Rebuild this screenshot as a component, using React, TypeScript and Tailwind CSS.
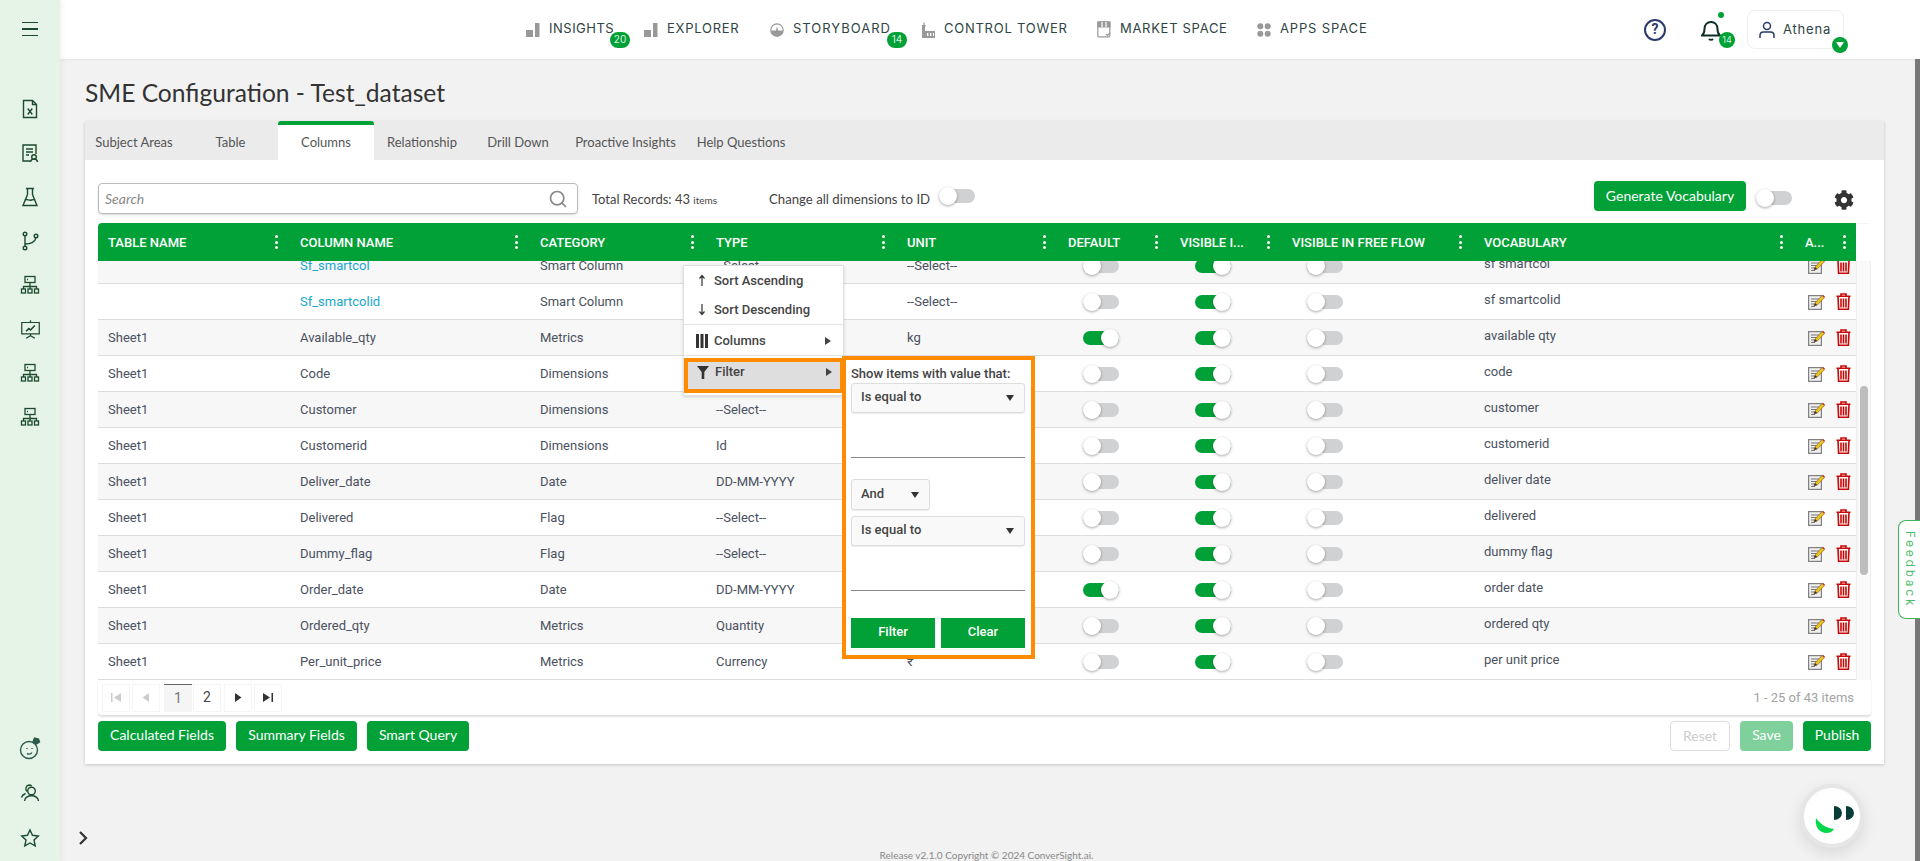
import { Search } from "lucide-react";
import { FaCog } from "react-icons/fa";

const green = "bg-[#02a137]";

const colWidths =
  "grid grid-cols-[192px_240px_176px_191px_161px_112px_112px_192px_321px_61px]";

const headers = [
  "Table Name",
  "Column Name",
  "Category",
  "Type",
  "Unit",
  "Default",
  "Visible I...",
  "Visible in Free Flow",
  "Vocabulary",
  "A...",
];

const rows = [
  { table: "", name: "Sf_smartcol", link: true, cat: "Smart Column", type: "--Select--", unit: "--Select--", def: false, vocab: "sf smartcol" },
  { table: "", name: "Sf_smartcolid", link: true, cat: "Smart Column", type: "--Select--", unit: "--Select--", def: false, vocab: "sf smartcolid" },
  { table: "Sheet1", name: "Available_qty", cat: "Metrics", type: "Quantity", unit: "kg", def: true, vocab: "available qty" },
  { table: "Sheet1", name: "Code", cat: "Dimensions", type: "--Select--", unit: "", def: false, vocab: "code" },
  { table: "Sheet1", name: "Customer", cat: "Dimensions", type: "--Select--", unit: "", def: false, vocab: "customer" },
  { table: "Sheet1", name: "Customerid", cat: "Dimensions", type: "Id", unit: "", def: false, vocab: "customerid" },
  { table: "Sheet1", name: "Deliver_date", cat: "Date", type: "DD-MM-YYYY", unit: "", def: false, vocab: "deliver date" },
  { table: "Sheet1", name: "Delivered", cat: "Flag", type: "--Select--", unit: "", def: false, vocab: "delivered" },
  { table: "Sheet1", name: "Dummy_flag", cat: "Flag", type: "--Select--", unit: "", def: false, vocab: "dummy flag" },
  { table: "Sheet1", name: "Order_date", cat: "Date", type: "DD-MM-YYYY", unit: "", def: true, vocab: "order date" },
  { table: "Sheet1", name: "Ordered_qty", cat: "Metrics", type: "Quantity", unit: "", def: false, vocab: "ordered qty" },
  { table: "Sheet1", name: "Per_unit_price", cat: "Metrics", type: "Currency", unit: "₹", def: false, vocab: "per unit price" },
];

const navItems = [
  { label: "INSIGHTS", width: "w-[118px]", icon: "bars", track: "tracking-[0.5px]", badge: "20", badgeLeft: "left-[84px]" },
  { label: "EXPLORER", width: "w-[126px]", icon: "bars", track: "tracking-[0.75px]" },
  { label: "STORYBOARD", width: "w-[151px]", icon: "gauge", track: "tracking-[1px]", badge: "14", badgeLeft: "left-[117px]" },
  { label: "CONTROL TOWER", width: "w-[176px]", icon: "tower", track: "tracking-[0.75px]" },
  { label: "MARKET SPACE", width: "w-[160px]", icon: "store", track: "tracking-[0.7px]" },
  { label: "APPS SPACE", width: "w-[110px]", icon: "dots", track: "tracking-[0.85px]" },
];

const tabs = [
  { label: "Subject Areas", width: "w-[98px]" },
  { label: "Table", width: "w-[95px]" },
  { label: "Columns", width: "w-[96px]", active: true },
  { label: "Relationship", width: "w-[96px]" },
  { label: "Drill Down", width: "w-[96px]" },
  { label: "Proactive Insights", width: "w-[119px]" },
  { label: "Help Questions", width: "w-[112px]" },
];

function NavIcon({ kind }: { kind: string }) {
  if (kind === "bars") {
    return (
      <svg width="14" height="14" viewBox="0 0 14 14" fill="#999">
        <rect x="0" y="7" width="7" height="7" />
        <rect x="9" y="0" width="4.5" height="14" />
      </svg>
    );
  }
  if (kind === "gauge") {
    return (
      <svg width="14" height="14" viewBox="0 0 14 14" fill="#999">
        <circle cx="7" cy="7" r="6.2" fill="none" stroke="#999" strokeWidth="1.2" />
        <path d="M1 7.5a6 6 0 0 0 12 0H8.2L7 3.5 6 7.5Z" />
      </svg>
    );
  }
  if (kind === "tower") {
    return (
      <svg width="14" height="16" viewBox="0 0 14 16" fill="#999">
        <path d="M1 3h4L4 5v4h10v7H1Z" />
        <rect x="2.4" y="0.5" width="1.2" height="3" />
        <rect x="6" y="11" width="1.4" height="3" fill="#fff" />
        <rect x="9" y="11" width="1.4" height="3" fill="#fff" />
        <rect x="12" y="11" width="1" height="3" fill="#fff" />
      </svg>
    );
  }
  if (kind === "store") {
    return (
      <svg width="14" height="17" viewBox="0 0 14 17" fill="none" stroke="#999" strokeWidth="1.2">
        <rect x="0.8" y="0.8" width="12" height="15" rx="1" />
        <path d="M1 1h12v5H1Z" fill="#999" />
        <path d="M5 1v5M9 1v5" stroke="#fff" />
        <path d="M9 13l1.5 1.5L13 12" />
      </svg>
    );
  }
  return (
    <svg width="14" height="14" viewBox="0 0 14 14" fill="#999">
      <circle cx="3.3" cy="3.2" r="3" />
      <circle cx="10.7" cy="3.2" r="3" />
      <circle cx="3.3" cy="10.8" r="3" />
      <circle cx="10.7" cy="10.8" r="3" />
    </svg>
  );
}

function SideIcon({ kind }: { kind: string }) {
  const props = {
    width: 20,
    height: 20,
    viewBox: "0 0 20 20",
    fill: "none",
    stroke: "#1c4a2c",
    strokeWidth: 1.4,
  };
  switch (kind) {
    case "file":
      return (
        <svg {...props}>
          <path d="M3.5 1.5h9l4 4v13h-13Z" />
          <path d="M12.5 1.5v4h4" />
          <path d="M7.7 9.5l4.6 6M12.3 9.5l-4.6 6" />
        </svg>
      );
    case "cert":
      return (
        <svg {...props}>
          <path d="M10 18H3V2h13v9" />
          <path d="M6 6h7M6 9h7M6 12h3" />
          <circle cx="14" cy="14" r="2.3" />
          <path d="M10.5 19c.3-2 1.5-3 3.5-3s3.2 1 3.5 3" />
        </svg>
      );
    case "flask":
      return (
        <svg {...props}>
          <path d="M6 1.5h8M7.5 1.5v6L3 18.5h14l-4.5-11v-6" />
          <path d="M5 13c2-1.5 4 1 6.5 0 1.5-.6 2.5-.6 3.5 0" />
        </svg>
      );
    case "branch":
      return (
        <svg {...props}>
          <circle cx="5" cy="3" r="1.8" />
          <circle cx="5" cy="17" r="1.8" />
          <circle cx="16" cy="5" r="1.8" />
          <path d="M5 5v10M5 13c5 0 10-2 11-6.300" />
        </svg>
      );
    case "tree":
      return (
        <svg {...props} strokeWidth={1.3}>
          <rect x="5" y="1.5" width="10" height="6" />
          <path d="M7 4.5h1" />
          <path d="M10 7.5v4M3.5 14v-2.500h13V14M10 11.500V14" />
          <rect x="1.5" y="14" width="4" height="4" />
          <rect x="8" y="14" width="4" height="4" />
          <rect x="14.5" y="14" width="4" height="4" />
        </svg>
      );
    case "board":
      return (
        <svg {...props} width={21} height={21} viewBox="0 0 24 24">
          <path d="M2 4h20v13H2Z" />
          <path d="M12 1.500V4M12 17v2M7 22l5-3 5 3" />
          <path d="M7 14l3-3 2 1.500 5-5" strokeWidth={1.8} />
        </svg>
      );
    case "bot":
      return (
        <svg {...props} width={24} height={24} viewBox="0 0 24 24" stroke="#2c5a4c">
          <circle cx="11" cy="14" r="8.5" />
          <path d="M9 12v1M14 12v1M9 17.500c2 1 4 .6 5-1" />
          <path d="M15 6l1.500-4 4 1 1 3-3 2Z" fill="#2c5a4c" />
        </svg>
      );
    case "users":
      return (
        <svg {...props}>
          <circle cx="11.5" cy="8" r="3.8" />
          <path d="M4.500 18c.6-3.500 3.200-5.200 7-5.200s6.400 1.700 7 5.200" />
          <path d="M7 8.500a3.800 3.800 0 0 1 2-6.500c1 0 2 .3 2.600 1M5.500 10.500c-2 .8-3.500 2-4 4" />
        </svg>
      );
    default:
      return (
        <svg {...props}>
          <path d="M10 2l2.500 5.300 5.800.7-4.300 4 1.200 5.800L10 15l-5.200 2.800L6 12 1.700 8l5.800-.7Z" />
        </svg>
      );
  }
}

function EditIcon() {
  return (
    <svg width="17" height="16" viewBox="0 0 17 16">
      <rect x="0.6" y="1.6" width="12.8" height="13.8" fill="#eee" stroke="#808080" strokeWidth="1.2" />
      <path d="M3 5h8M3 7.5h6M3 10h4M3 12.5h4" stroke="#777" strokeWidth="1" />
      <path d="M6 12l1-3 7-7.500 2.400 2.200-7.200 7.400Z" fill="#e8c020" stroke="#8a5a20" strokeWidth="0.6" />
      <path d="M6 12l1-3 2.200 2.100Z" fill="#333" />
      <path d="M14 1.500l2.400 2.200 .6-1-2-2Z" fill="#b03030" />
    </svg>
  );
}

function TrashIcon() {
  return (
    <svg width="15" height="17" viewBox="0 0 15 17" fill="none" stroke="#c80808" strokeWidth="1.6">
      <path d="M0.5 3.200h14M5 3V1h5v2" />
      <path d="M2 3.500l.6 12.700h9.800l.6-12.700" />
      <path d="M5 5.500v9M7.500 5.500v9M10 5.500v9" />
    </svg>
  );
}

function Toggle({ on = false }: { on?: boolean }) {
  return (
    <div className="flex h-[18px] w-[36px] items-center">
      <div className="relative h-[14px] w-[36px] rounded-full">
        <div className={`h-full w-full rounded-full ${on ? green : "bg-[#d0d1d3]"}`} />
        <div
          className={`absolute top-[-2px] h-[18px] w-[18px] rounded-full bg-white shadow-[0_1px_3px_rgba(0,0,0,0.35)] ${
            on ? "right-0" : "left-0"
          }`}
        />
      </div>
    </div>
  );
}

function Kebab() {
  return (
    <div className="flex w-[3px] flex-col gap-[2.5px]">
      <span className="h-[3px] w-[3px] rounded-full bg-white" />
      <span className="h-[3px] w-[3px] rounded-full bg-white" />
      <span className="h-[3px] w-[3px] rounded-full bg-white" />
    </div>
  );
}

function Caret({ className = "" }: { className?: string }) {
  return (
    <svg width="8" height="6" viewBox="0 0 8 6" className={className}>
      <path d="M0 0h8L4 6Z" fill="#333" />
    </svg>
  );
}

function RightArrow() {
  return (
    <svg width="6" height="8" viewBox="0 0 6 8">
      <path d="M0 0l6 4-6 4Z" fill="#444" />
    </svg>
  );
}

function PagerButton({ kind, disabled }: { kind: string; disabled?: boolean }) {
  const fill = disabled ? "#ccc" : "#333";
  return (
    <div className="flex h-[28px] w-[28px] items-center justify-center border border-[#f5f5f5]">
      <svg width="10" height="9" viewBox="0 0 10 9" fill={fill}>
        {kind === "first" && <path d="M0 0h1.500v9H0ZM10 0v9L3 4.500Z" />}
        {kind === "prev" && <path d="M8 0v9L1.500 4.500Z" />}
        {kind === "next" && <path d="M2 0v9l6.500-4.500Z" />}
        {kind === "last" && <path d="M0 0v9l7-4.500ZM8.500 0H10v9H8.500Z" />}
      </svg>
    </div>
  );
}

function FilterSelect({ label }: { label: string }) {
  return (
    <div className="flex h-[30px] w-[174px] items-center justify-between rounded-[3px] border border-[#ddd] bg-[#f9f9f9] pl-[9px] pr-[10px] shadow-[0_1px_1px_rgba(0,0,0,0.08)]">
      <span className="pb-[2px]">{label}</span>
      <Caret />
    </div>
  );
}

function ColumnMenu() {
  return (
    <div className="absolute left-[683px] top-[265px] z-20 w-[161px] border border-[#e0e0e0] bg-white pb-[2px] font-['Roboto',sans-serif] text-[13px] font-medium text-[#444] shadow-[0_1px_3px_rgba(0,0,0,0.15)]">
      <div className="flex h-[29px] items-center">
        <svg width="30" height="13" viewBox="0 0 30 13" fill="none" stroke="#333" strokeWidth="1.2">
          <path d="M18 12V2M15.500 4.500L18 1.500l2.500 3" />
        </svg>
        <span>Sort Ascending</span>
      </div>
      <div className="flex h-[30px] items-center border-b border-[#e3e3e3]">
        <svg width="30" height="13" viewBox="0 0 30 13" fill="none" stroke="#333" strokeWidth="1.2">
          <path d="M18 1v10M15.500 8.500l2.500 3 2.500-3" />
        </svg>
        <span>Sort Descending</span>
      </div>
      <div className="flex h-[31px] items-center justify-between border-b border-[#e3e3e3] pr-[12px] pt-[2px]">
        <div className="flex items-center">
          <svg width="30" height="14" viewBox="0 0 30 14" fill="#333">
            <rect x="12" y="0" width="3" height="14" />
            <rect x="16.5" y="0" width="3" height="14" />
            <rect x="21" y="0" width="3" height="14" />
          </svg>
          <span>Columns</span>
        </div>
        <RightArrow />
      </div>
      <div className="mt-[2px] flex h-[35px] w-[160px] items-center justify-between border-4 border-[#ff8c00] bg-[#dedede] pb-[7px] pr-[8px]">
        <div className="flex items-center">
          <svg width="27" height="13" viewBox="0 0 27 13" fill="#333">
            <path d="M9 0h12l-4.700 6v7h-2.600V6Z" />
          </svg>
          <span>Filter</span>
        </div>
        <RightArrow />
      </div>
    </div>
  );
}

function FilterPanel() {
  return (
    <div className="absolute left-[842px] top-[356px] z-30 h-[303px] w-[193px] border-4 border-[#ff8c00] bg-white pl-[5px] pt-[6px] font-['Roboto',sans-serif] text-[13px] font-medium text-[#444]">
      <div className="mb-[1px] h-[16px] leading-4">Show items with value that:</div>
      <FilterSelect label="Is equal to" />
      <div className="h-[45px] w-[174px] border-b border-[#888]" />
      <div className="mt-[21px] flex h-[31px] w-[79px] items-center justify-between rounded-[3px] border border-[#ddd] bg-[#f9f9f9] pl-[9px] pr-[10px] shadow-[0_1px_1px_rgba(0,0,0,0.08)]">
        <span className="pb-[2px]">And</span>
        <Caret />
      </div>
      <div className="mt-[6px]">
        <FilterSelect label="Is equal to" />
      </div>
      <div className="h-[45px] w-[174px] border-b border-[#888]" />
      <div className="mt-[27px] flex w-[174px] justify-between">
        <div className={`flex h-[30px] w-[84px] items-center justify-center pb-[2px] ${green} text-white`}>Filter</div>
        <div className={`flex h-[30px] w-[84px] items-center justify-center pb-[2px] ${green} text-white`}>Clear</div>
      </div>
    </div>
  );
}

export default function App() {
  return (
    <div className="relative flex h-[861px] w-[1920px] overflow-hidden bg-[#f2f2f2] font-['Lato',sans-serif]">
      {/* left rail */}
      <aside className="z-10 flex h-full w-[60px] shrink-0 flex-col justify-between bg-[#e6f4e8] shadow-[2px_0_6px_rgba(0,0,0,0.05)]">
        <div>
          <div className="flex h-[58px] items-center justify-center">
            <div className="flex w-[16px] flex-col gap-[5px]">
              <span className="h-[1.5px] bg-[#1c4a2c]" />
              <span className="h-[1.5px] bg-[#1c4a2c]" />
              <span className="h-[1.5px] bg-[#1c4a2c]" />
            </div>
          </div>
          <div className="mt-[29px]">
            {["file", "cert", "flask", "branch", "tree", "board", "tree", "tree"].map((kind, i) => (
              <div key={i} className="flex h-[44px] items-center justify-center">
                <SideIcon kind={kind} />
              </div>
            ))}
          </div>
        </div>
        <div className="pb-px">
          {["bot", "users", "star"].map((kind) => (
            <div key={kind} className="flex h-[45px] items-center justify-center">
              <SideIcon kind={kind} />
            </div>
          ))}
        </div>
      </aside>

      <div className="flex h-full min-w-0 flex-1 flex-col pr-[5px]">
        {/* top bar */}
        <header className="-mr-[5px] flex h-[59px] shrink-0 items-center bg-white pl-[466px] pr-[76px] shadow-[0_1px_3px_rgba(0,0,0,0.06)]">
          <nav className="flex items-center">
            {navItems.map((item) => (
              <div key={item.label} className={`relative flex h-[20px] items-center ${item.width}`}>
                <div className="flex w-[23px] shrink-0 items-center">
                  <NavIcon kind={item.icon} />
                </div>
                <span className={`whitespace-nowrap pb-[2px] font-['Inter',sans-serif] text-[13px] text-[#2f4444] ${item.track}`}>
                  {item.label}
                </span>
                {item.badge && (
                  <span
                    className={`absolute top-[12px] flex h-[16px] w-[20px] items-center justify-center rounded-full ${item.badgeLeft} ${green} font-['Inter',sans-serif] text-[10px] text-[#d8f3df]`}
                  >
                    {item.badge}
                  </span>
                )}
              </div>
            ))}
          </nav>
          <div className="ml-auto flex items-center">
            <div className="mr-[34px] flex h-[22px] w-[22px] items-center justify-center rounded-full border-2 border-[#2b3a6b] font-['Roboto',sans-serif] text-[14px] font-bold text-[#2b3a6b]">
              ?
            </div>
            <div className="relative mr-[25px] flex h-[24px] w-[22px] items-center justify-center">
              <svg width="20" height="22" viewBox="0 0 20 22" fill="none" stroke="#0f2f27" strokeWidth="2">
                <path d="M1 16.500c2-1.500 2.500-3 2.500-6.500 0-4 2.600-7 6.500-7s6.500 3 6.500 7c0 3.500.5 5 2.500 6.500Z" />
                <path d="M8 20c1 1 3 1 4 0" />
              </svg>
              <span className={`absolute right-[-2px] top-[-6px] h-[6px] w-[6px] rounded-full ${green}`} />
              <span
                className={`absolute left-[19px] top-[14px] flex h-[16px] w-[16px] items-center justify-center rounded-full ${green} font-['Inter',sans-serif] text-[9px] text-[#d8f3df]`}
              >
                14
              </span>
            </div>
            <div className="relative flex h-[39px] w-[97px] items-center rounded-lg border border-[#eee] pl-[11px]">
              <svg width="16" height="18" viewBox="0 0 16 18" fill="none" stroke="#2b3a6b" strokeWidth="1.5">
                <circle cx="8" cy="5" r="3.5" />
                <path d="M1 17v-2.500c0-2 1.500-3.500 3.500-3.500h7c2 0 3.500 1.500 3.500 3.500V17" />
              </svg>
              <span className="ml-[8px] font-['Inter',sans-serif] text-[13px] tracking-[0.8px] text-[#2f4444]">Athena</span>
              <span className={`absolute left-[84px] top-[26px] flex h-[16px] w-[16px] items-center justify-center rounded-full ${green}`}>
                <svg width="8" height="6" viewBox="0 0 8 6">
                  <path d="M0 0h8L4 6Z" fill="#fff" />
                </svg>
              </span>
            </div>
          </div>
        </header>

        <main className="flex min-h-0 flex-1 flex-col pl-[25px] pr-[31px]">
          <h1 className="flex h-[62px] shrink-0 items-center pt-[7px] text-[24.6px] font-normal text-[#333]">
            SME Configuration - Test_dataset
          </h1>

          {/* card */}
          <section className="h-[643px] shrink-0 bg-white shadow-[0_1px_3px_rgba(0,0,0,0.2)]">
            <div className="flex h-[39px] bg-[#ebebeb] text-[13px] text-[#555]">
              {tabs.map((tab) => (
                <div
                  key={tab.label}
                  className={`flex items-center justify-center ${tab.width} ${
                    tab.active ? "rounded-t-[3px] border-t-4 border-[#02a137] bg-white" : "pt-[4px]"
                  }`}
                >
                  {tab.label}
                </div>
              ))}
            </div>

            <div className="px-[13px] pt-[21px]">
              {/* toolbar */}
              <div className="flex h-[33px] items-start">
                <div className="mt-[2px] flex h-[31px] w-[480px] items-center justify-between rounded border border-[#bbb] pl-[6px] pr-[9px] shadow-[0_1px_2px_rgba(0,0,0,0.15)]">
                  <span className="text-[14px] italic text-[#888]">Search</span>
                  <Search size={20} strokeWidth={2} className="text-[#888]" />
                </div>
                <div className="ml-[14px] mt-[10px] w-[177px] text-[13px] leading-4 text-[#444]">
                  Total Records: 43 <span className="text-[10px]">items</span>
                </div>
                <div className="mt-[10px] text-[13.2px] leading-4 text-[#444]">Change all dimensions to ID</div>
                <div className="ml-[9px] mt-[6px]">
                  <Toggle />
                </div>
                <button className={`ml-auto flex h-[30px] w-[152px] items-center justify-center rounded pb-[2px] ${green} text-[14px] text-white`}>
                  Generate Vocabulary
                </button>
                <div className="ml-[10px] mt-[8px]">
                  <Toggle />
                </div>
                <FaCog size={20} className="ml-[42px] mr-[17px] mt-[9px] text-[#333]" />
              </div>

              {/* grid */}
              <div className="mt-[9px]">
                <div className="flex">
                  <div className={`${colWidths} h-[38px] w-[1758px] rounded-tl ${green} font-['Roboto',sans-serif] text-[13px] font-medium uppercase text-white`}>
                    {headers.map((h) => (
                      <div key={h} className={`flex items-center justify-between pl-[10px] ${h === "A..." ? "pr-[10px]" : "pr-[12px]"}`}>
                        <span className="pt-[2px]">{h}</span>
                        <Kebab />
                      </div>
                    ))}
                  </div>
                  <div className="h-[38px] w-[15px] rounded-tr border-t border-[#f5f5f5]" />
                </div>
                <div className="flex h-[419px]">
                  <div className="h-[419px] w-[1758px] overflow-hidden">
                    <div className="-mt-[13px] font-['Roboto',sans-serif] text-[13px] text-[#4a5160]">
                      {rows.map((row, i) => (
                        <div
                          key={row.name}
                          className={`${colWidths} h-[36px] items-center border-b border-[#ddd] ${i % 2 === 0 ? "bg-[#f7f7f7]" : "bg-white"}`}
                        >
                          <div className="pl-[10px]">{row.table}</div>
                          <div className={`pl-[10px] ${row.link ? "text-[#18a8cc]" : ""}`}>{row.name}</div>
                          <div className="pl-[10px]">{row.cat}</div>
                          <div className="pl-[10px]">{row.type}</div>
                          <div className="pl-[10px]">{row.unit}</div>
                          <div className="pl-[25px]">
                            <Toggle on={row.def} />
                          </div>
                          <div className="pl-[25px]">
                            <Toggle on />
                          </div>
                          <div className="pl-[25px]">
                            <Toggle />
                          </div>
                          <div className="pb-[4px] pl-[10px]">{row.vocab}</div>
                          <div className="flex items-center gap-[11px] pl-[13px]">
                            <EditIcon />
                            <TrashIcon />
                          </div>
                        </div>
                      ))}
                    </div>
                  </div>
                  <div className="h-full w-[15px] border-x border-[#eee] bg-[#f9f9f9] pl-[3px] pt-[125px]">
                    <div className="h-[189px] w-[8px] rounded-full bg-[#bdbdbd]" />
                  </div>
                </div>

                {/* pager */}
                <div className="flex h-[36px] items-center justify-between rounded-b border-b border-[#ddd] pl-[4px] pr-[17px] shadow-[0_1px_2px_rgba(0,0,0,0.12)]">
                  <div className="flex items-center font-['Roboto',sans-serif] text-[14px] text-[#444]">
                    <PagerButton kind="first" disabled />
                    <div className="w-[2px]" />
                    <PagerButton kind="prev" disabled />
                    <div className="ml-[4px] flex h-[28px] w-[28px] items-center justify-center border-t border-[#666] bg-[#f5f5f5] text-[#777]">1</div>
                    <div className="ml-px flex h-[28px] w-[28px] items-center justify-center border border-[#f5f5f5]">2</div>
                    <div className="w-[3px]" />
                    <PagerButton kind="next" />
                    <div className="w-[2px]" />
                    <PagerButton kind="last" />
                  </div>
                  <span className="font-['Roboto',sans-serif] text-[13px] text-[#a3a3a3]">1 - 25 of 43 items</span>
                </div>

                {/* footer actions */}
                <div className="mt-[5px] flex h-[30px] items-stretch gap-[10px] text-[14px] text-white">
                  <button className={`w-[128px] rounded pb-[3px] ${green}`}>Calculated Fields</button>
                  <button className={`w-[121px] rounded pb-[3px] ${green}`}>Summary Fields</button>
                  <button className={`w-[102px] rounded pb-[3px] ${green}`}>Smart Query</button>
                  <button className="ml-auto w-[60px] rounded border border-[#ddd] pb-[2px] text-[#ccc]">Reset</button>
                  <button className="w-[53px] rounded bg-[#80d09b] pb-[3px]">Save</button>
                  <button className={`w-[68px] rounded pb-[3px] ${green}`}>Publish</button>
                </div>
              </div>
            </div>
          </section>

          <div className="mt-auto pl-[4px] text-center text-[10px] leading-3 text-[#888]">
            Release v2.1.0 Copyright © 2024 ConverSight.ai.
          </div>
        </main>
      </div>

      {/* page scrollbar */}
      <div className="absolute bottom-0 right-0 top-[59px] z-10 w-[5px] bg-[#777]" />

      <ColumnMenu />
      <FilterPanel />

      {/* expand rail */}
      <svg className="absolute left-[78px] top-[831px] z-10" width="10" height="14" viewBox="0 0 10 14" fill="none" stroke="#333" strokeWidth="2.2">
        <path d="M2 1l6 6-6 6" />
      </svg>

      {/* feedback tab */}
      <div className="absolute right-0 top-[520px] z-20 flex h-[99px] w-[22px] items-center justify-center rounded-l-lg border border-r-0 border-[#3eb55a] bg-white font-['Inter',sans-serif] text-[11.5px] tracking-[3px] text-[#4cbb68] [writing-mode:vertical-rl]">
        Feedback
      </div>

      {/* assistant bubble */}
      <div className="absolute left-[1800px] top-[784px] z-20 flex h-[64px] w-[64px] items-center justify-center rounded-full border-4 border-[#e6e6e6] bg-white shadow-[0_6px_16px_rgba(0,0,0,0.1)]">
        <svg width="56" height="56" viewBox="-28 -28 56 56">
          <path d="M2-10A8 7 0 0 1 2 4ZM14-10A8 7 0 0 1 14 4Z" fill="#0b3d38" />
          <path d="M-16 2C-12 8-6 12 2 13 0 17-6 18-10 16-15 14-17 8-16 2Z" fill="#00d84a" />
        </svg>
      </div>
    </div>
  );
}
